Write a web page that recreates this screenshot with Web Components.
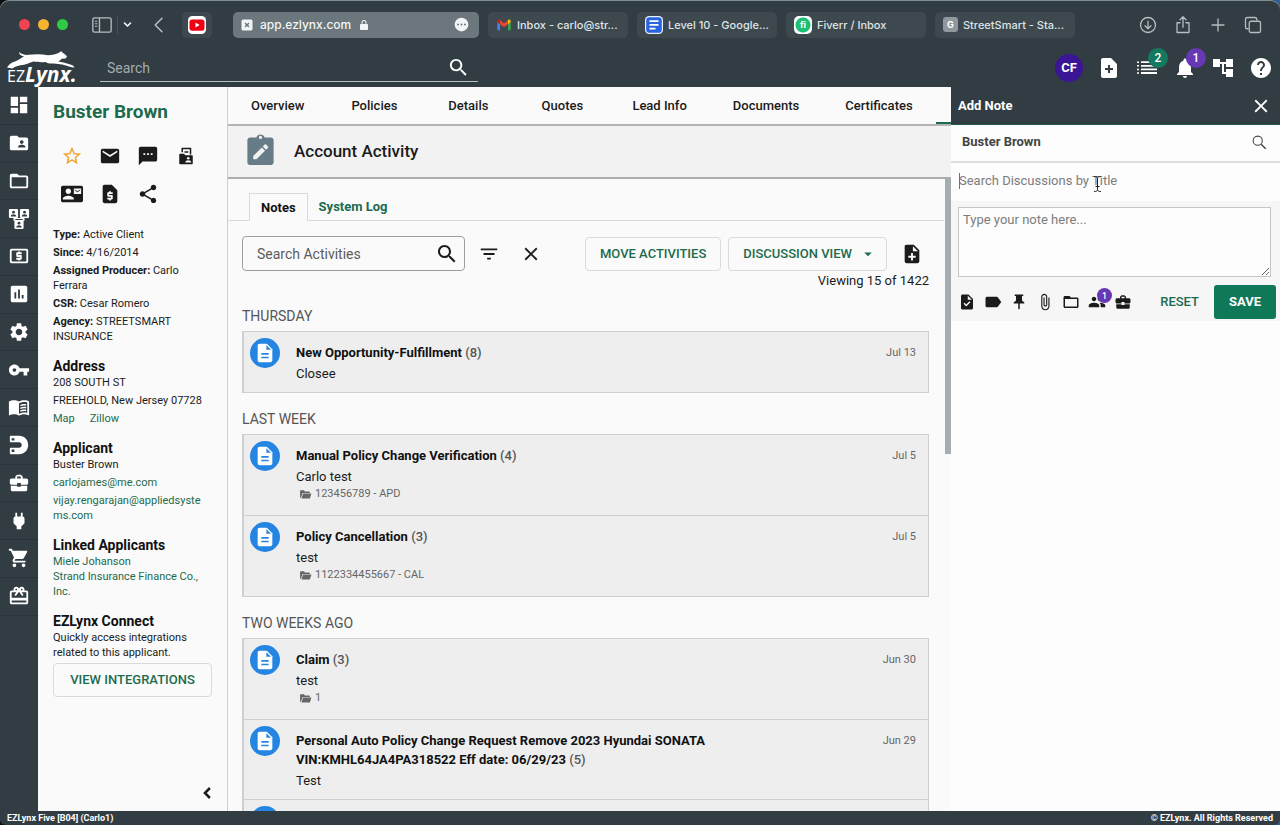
<!DOCTYPE html>
<html lang="en">
<head>
<meta charset="utf-8">
<title>EZLynx - Account Activity</title>
<style>
  html, body { margin: 0; height: 100%; }
  body {
    background: linear-gradient(90deg, #0b0f10 50%, #2e5f9a 50%);
    font-family: Roboto, "Liberation Sans", sans-serif;
    font-size: 14px;
    color: #1b1b1b;
  }
</style>
</head>
<body>
<ez-app></ez-app>

<script>
const BASE = `
  *, *::before, *::after { box-sizing: border-box; }
  button, input, textarea { font: inherit; color: inherit; margin: 0; }
  button { background: none; border: 0; padding: 0; cursor: pointer; }
  a { color: #1c6b4c; text-decoration: none; }
`;

function define(name, css, html, setup) {
  const tpl = document.createElement('template');
  tpl.innerHTML = `<style>${BASE}${css}</style>${html}`;
  customElements.define(name, class extends HTMLElement {
    constructor() {
      super();
      this.attachShadow({ mode: 'open' }).append(tpl.content.cloneNode(true));
    }
    connectedCallback() { if (setup) setup(this, this.shadowRoot); }
  });
}

const DOC = 'M14 2H6c-1.1 0-2 .9-2 2v16c0 1.1.9 2 2 2h12c1.1 0 2-.9 2-2V8l-6-6z';
const p = d => `<path fill-rule="evenodd" d="${d}"/>`;
const person = (x, y) => `<rect x="${x}" y="${y}" width="10" height="10" rx="1.2"/><circle cx="${x + 5}" cy="${y + 3.6}" r="1.5" fill="var(--hole)"/><path fill="var(--hole)" d="M${x + 2} ${y + 8.2}c0-3 6-3 6 0z"/>`;

const ICONS = {
  dashboard: p('M3 13h8V3H3v10zm0 8h8v-6H3v6zm10 0h8V11h-8v10zm0-18v6h8V3h-8z'),
  folderShared: p('M20 6h-8l-2-2H4c-1.1 0-2 .9-2 2v12c0 1.1.9 2 2 2h16c1.1 0 2-.9 2-2V8c0-1.1-.9-2-2-2zm-5 3c1.1 0 2 .9 2 2s-.9 2-2 2-2-.9-2-2 .9-2 2-2zm4 8h-8v-1c0-1.33 2.67-2 4-2s4 .67 4 2v1z'),
  folder: p('M20 6h-8l-2-2H4c-1.1 0-2 .9-2 2v12c0 1.1.9 2 2 2h16c1.1 0 2-.9 2-2V8c0-1.1-.9-2-2-2zm0 12H4V8h16v10z'),
  team: person(1, 1) + person(13, 1) + person(7, 13) + '<path d="M6 11v3h2v-2h8v2h2v-3z"/>',
  cash: p('M11 17h2v-1h1c.55 0 1-.45 1-1v-3c0-.55-.45-1-1-1h-3v-1h4V8h-2V7h-2v1h-1c-.55 0-1 .45-1 1v3c0 .55.45 1 1 1h3v1H9v2h2v1zm9-13H4c-1.11 0-2 .89-2 2v12c0 1.11.89 2 2 2h16c1.11 0 2-.89 2-2V6c0-1.11-.89-2-2-2zm0 14H4V6h16v12z'),
  report: p('M19 3H5c-1.1 0-2 .9-2 2v14c0 1.1.9 2 2 2h14c1.1 0 2-.9 2-2V5c0-1.1-.9-2-2-2zM9 17H7v-7h2v7zm4 0h-2V7h2v10zm4 0h-2v-4h2v4z'),
  settings: p('M19.14 12.94c.04-.3.06-.61.06-.94 0-.32-.02-.64-.07-.94l2.03-1.58c.18-.14.23-.41.12-.61l-1.92-3.32c-.12-.22-.37-.29-.59-.22l-2.39.96c-.5-.38-1.03-.7-1.62-.94l-.36-2.54c-.04-.24-.24-.41-.48-.41h-3.84c-.24 0-.43.17-.47.41l-.36 2.54c-.59.24-1.13.57-1.62.94l-2.39-.96c-.22-.08-.47 0-.59.22L2.74 8.87c-.12.21-.08.47.12.61l2.03 1.58c-.05.3-.09.63-.09.94s.02.64.07.94l-2.03 1.58c-.18.14-.23.41-.12.61l1.92 3.32c.12.22.37.29.59.22l2.39-.96c.5.38 1.03.7 1.62.94l.36 2.54c.05.24.24.41.48.41h3.84c.24 0 .44-.17.47-.41l.36-2.54c.59-.24 1.13-.56 1.62-.94l2.39.96c.22.08.47 0 .59-.22l1.92-3.32c.12-.22.07-.47-.12-.61l-2.01-1.58zM12 15.6c-1.98 0-3.6-1.62-3.6-3.6s1.62-3.6 3.6-3.6 3.6 1.62 3.6 3.6-1.62 3.6-3.6 3.6z'),
  key: p('M12.65 10C11.83 7.67 9.61 6 7 6c-3.31 0-6 2.69-6 6s2.69 6 6 6c2.61 0 4.83-1.67 5.65-4H17v4h4v-4h2v-4H12.65zM7 14c-1.1 0-2-.9-2-2s.9-2 2-2 2 .9 2 2-.9 2-2 2z'),
  book: p('M21 5c-1.11-.35-2.33-.5-3.5-.5-1.95 0-4.05.4-5.5 1.5-1.45-1.1-3.55-1.5-5.5-1.5S2.45 4.9 1 6v14.65c0 .25.25.5.5.5C3.1 20.45 5.05 20 6.5 20c1.95 0 4.05.4 5.5 1.5 1.35-.85 3.8-1.5 5.5-1.5 1.65 0 3.35.3 4.75 1.05.4.1.75-.1.75-.45V6c-.6-.45-1.25-.75-2-1zm0 13.5c-1.1-.35-2.3-.5-3.5-.5-1.7 0-4.15.65-5.5 1.5V8c1.35-.85 3.8-1.5 5.5-1.5 1.2 0 2.4.15 3.5.5v11.5z') + '<path d="M13.5 9.6c2-.9 4.2-1.1 6.300-.6v1.500c-2.100-.5-4.300-.3-6.300.6zM13.500 12.600c2-.9 4.200-1.100 6.300-.6v1.500c-2.100-.5-4.300-.3-6.300.6zM13.500 15.600c2-.9 4.200-1.100 6.300-.6v1.500c-2.100-.5-4.300-.3-6.300.6z"/>',
  magnet: '<path d="M3 2h9c6 0 10 4.400 10 10s-4 10-10 10H3c-.8 0-1-.4-1-1v-5c0-.6.300-1 1-1h9c1.800 0 3-1.300 3-3s-1.200-3-3-3H3c-.700 0-1-.4-1-1V3c0-.6.300-1 1-1z"/><path fill="var(--hole)" d="M4 4.500h3v2.500H4zM4 17h3v2.500H4z"/>',
  briefcase: p('M10 16v-1H3v4c0 1.110.89 2 2 2h14c1.110 0 2-.89 2-2v-4h-7v1h-4zm10-9h-4V5l-2-2h-4L8 5v2H4c-1.100 0-2 .9-2 2v3c0 1.110.89 2 2 2h6v-2h4v2h6c1.100 0 2-.9 2-2V9c0-1.100-.9-2-2-2zm-6 0h-4V5h4v2z'),
  plug: p('M16 7V3h-2v4h-4V3H8v4c-1 0-2 1-2 2v5.500L9.500 18v3h5v-3l3.500-3.500V9c0-1-1-2-2-2z'),
  cart: p('M7 18c-1.1 0-2 .9-2 2s.9 2 2 2 2-.9 2-2-.9-2-2-2zM1 2v2h2l3.600 7.590-1.350 2.450c-.16.28-.25.61-.25.96 0 1.100.9 2 2 2h12v-2H7.420c-.14 0-.25-.11-.25-.25l.03-.12.9-1.630h7.450c.75 0 1.410-.41 1.750-1.030l3.580-6.490c.08-.14.12-.31.12-.48 0-.55-.45-1-1-1H5.210l-.94-2H1zm16 16c-1.100 0-2 .9-2 2s.9 2 2 2 2-.9 2-2-.9-2-2-2z'),
  gift: p('M20 6h-2.18c.11-.31.18-.65.18-1 0-1.66-1.34-3-3-3-1.05 0-1.96.54-2.5 1.35l-.5.67-.5-.68C10.960 2.540 10.050 2 9 2 7.340 2 6 3.340 6 5c0 .35.07.69.18 1H4c-1.110 0-2 .89-2 2v11c0 1.110.89 2 2 2h16c1.110 0 2-.89 2-2V8c0-1.110-.89-2-2-2zm-5-2c.55 0 1 .45 1 1s-.45 1-1 1-1-.45-1-1 .45-1 1-1zM9 4c.55 0 1 .45 1 1s-.45 1-1 1-1-.45-1-1 .45-1 1-1zm11 15H4v-2h16v2zm0-5H4V8h5.080L7 10.830 8.620 12 11 8.760l1-1.360 1 1.360L15.380 12 17 10.830 14.920 8H20v6z'),
  search: p('M15.5 14h-.79l-.28-.27C15.410 12.590 16 11.110 16 9.500 16 5.910 13.090 3 9.500 3S3 5.910 3 9.500 5.910 16 9.500 16c1.610 0 3.090-.59 4.230-1.570l.27.28v.79l5 4.990L20.490 19l-4.990-5zm-6 0C7.010 14 5 11.990 5 9.500S7.010 5 9.500 5 14 7.010 14 9.500 11.990 14 9.500 14z'),
  searchThin: '<circle cx="9.500" cy="9.500" r="6.500" fill="none" stroke="currentColor" stroke-width="1.500"/><path d="M14.300 14.300l6.500 6.500" stroke="currentColor" stroke-width="2"/>',
  star: p('M22 9.240l-7.190-.62L12 2 9.190 8.630 2 9.240l5.460 4.730L5.820 21 12 17.270 18.180 21l-1.630-7.030L22 9.240zM12 15.400l-3.760 2.270 1-4.280-3.320-2.880 4.380-.38L12 6.100l1.710 4.040 4.380.38-3.320 2.880 1 4.280L12 15.400z'),
  mail: p('M20 4H4c-1.100 0-2 .9-2 2v12c0 1.100.9 2 2 2h16c1.100 0 2-.9 2-2V6c0-1.100-.9-2-2-2zm0 4l-8 5-8-5V6l8 5 8-5v2z'),
  sms: p('M20 2H4c-1.100 0-2 .9-2 2v18l4-4h14c1.100 0 2-.9 2-2V4c0-1.100-.9-2-2-2zM9 11H7V9h2v2zm4 0h-2V9h2v2zm4 0h-2V9h2v2z'),
  sharedDoc: '<path fill-rule="evenodd" d="M6 1h13v9h-2V3H8v4H6zM10 5.500h5v2h-5zM4 9h5.500l1.500 2H20c.6 0 1 .4 1 1v10c0 .6-.4 1-1 1H4c-.6 0-1-.4-1-1V10c0-.6.400-1 1-1z"/><circle cx="15" cy="15" r="1.700" fill="var(--hole)"/><path fill="var(--hole)" d="M11 20.500c0-4 8-4 8 0z"/>',
  contact: p('M21 8V7l-3 2-3-2v1l3 2 3-2zm1-5H2C.9 3 0 3.900 0 5v14c0 1.100.9 2 2 2h20c1.100 0 2-.9 2-2V5c0-1.100-.9-2-2-2zM8 6c1.660 0 3 1.340 3 3s-1.340 3-3 3-3-1.340-3-3 1.340-3 3-3zm6 12H2v-1c0-2 4-3.100 6-3.100s6 1.100 6 3.100v1zm8-6h-8V6h8v6z'),
  quote: p(DOC + 'm1 10h-4v1h3c.55 0 1 .45 1 1v3c0 .55-.45 1-1 1h-1v1h-2v-1H9v-2h4v-1h-3c-.55 0-1-.45-1-1v-3c0-.55.45-1 1-1h1V9h2v1h2v2z'),
  share: p('M18 16.080c-.76 0-1.440.3-1.960.77L8.910 12.700c.05-.23.09-.46.09-.7s-.04-.47-.09-.7l7.050-4.110c.54.5 1.250.81 2.040.81 1.660 0 3-1.340 3-3s-1.340-3-3-3-3 1.340-3 3c0 .24.04.47.09.7L8.040 9.810C7.500 9.310 6.790 9 6 9c-1.660 0-3 1.340-3 3s1.340 3 3 3c.79 0 1.500-.31 2.040-.81l7.120 4.160c-.05.21-.08.43-.08.65 0 1.610 1.310 2.920 2.920 2.920s2.920-1.310 2.920-2.920-1.310-2.920-2.920-2.920z'),
  noteAdd: p(DOC + 'm2 14h-3v3h-2v-3H8v-2h3v-3h2v3h3v2zm-3-7V3.500L18.500 9H13z'),
  noteAddSolid: p(DOC + 'm2 12h-3v3h-2v-3H8v-2h3V9h2v3h3v2z'),
  list: '<path d="M2 5.500h2V7H2zM2 9.100h2v1.500H2zM2 12.700h2v1.500H2zM2 16.300h2v1.500H2zM6 5.300h16v1.800H6zM6 8.900h16v1.800H6zM6 12.500h16v1.800H6zM6 16.100h16v1.800H6z"/>',
  bell: p('M12 22c1.100 0 2-.9 2-2h-4c0 1.100.89 2 2 2zm6-6v-5c0-3.070-1.640-5.640-4.500-6.320V4c0-.83-.67-1.500-1.500-1.500s-1.500.67-1.500 1.500v.68C7.630 5.360 6 7.920 6 11v5l-2 2v1h16v-1l-2-2z'),
  tree: p('M22 11V3h-7v3H9V3H2v8h7V8h2v10h4v3h7v-8h-7v3h-2V8h2v3z'),
  help: p('M12 2C6.480 2 2 6.480 2 12s4.480 10 10 10 10-4.480 10-10S17.520 2 12 2zm1 17h-2v-2h2v2zm2.070-7.750l-.9.92C13.450 12.900 13 13.500 13 15h-2v-.5c0-1.100.45-2.100 1.170-2.830l1.240-1.260c.37-.36.59-.86.59-1.410 0-1.100-.9-2-2-2s-2 .9-2 2H8c0-2.210 1.790-4 4-4s4 1.790 4 4c0 .88-.36 1.680-.93 2.250z'),
  close: p('M19 6.410L17.590 5 12 10.590 6.410 5 5 6.410 10.590 12 5 17.590 6.410 19 12 13.410 17.590 19 19 17.590 13.410 12z'),
  filter: p('M10 18h4v-2h-4v2zM3 6v2h18V6H3zm3 7h12v-2H6v2z'),
  dropdown: p('M7 10l5 5 5-5z'),
  task: p(DOC + 'm-3.060 16L7.400 14.460l1.410-1.410 2.120 2.120 4.240-4.240 1.410 1.410L10.940 18zM13 9V3.500L18.500 9H13z'),
  label: p('M18.630 5.840C18.270 5.330 17.670 5 17 5H4C2.900 5 2 5.900 2 7v10c0 1.100.9 2 2 2h13c.67 0 1.270-.33 1.630-.84L23 12l-4.370-6.160z'),
  pin: p('M16 9V4h1c.55 0 1-.45 1-1s-.45-1-1-1H7c-.55 0-1 .45-1 1s.45 1 1 1h1v5c0 1.660-1.340 3-3 3v2h5.970v7l1 1 1-1v-7H19v-2c-1.660 0-3-1.340-3-3z'),
  clip: p('M16.500 6v11.500c0 2.210-1.790 4-4 4s-4-1.790-4-4V5c0-1.380 1.120-2.500 2.500-2.500s2.500 1.120 2.500 2.500v10.500c0 .55-.45 1-1 1s-1-.45-1-1V6H10v9.500c0 1.380 1.120 2.500 2.500 2.500s2.500-1.120 2.500-2.500V5c0-2.210-1.790-4-4-4S7 2.790 7 5v12.500c0 3.040 2.460 5.500 5.500 5.500s5.500-2.460 5.500-5.500V6h-1.500z'),
  people: p('M16 11c1.660 0 3-1.340 3-3s-1.340-3-3-3-3 1.340-3 3 1.340 3 3 3zm-8 0c1.660 0 3-1.340 3-3S9.660 5 8 5 5 6.340 5 8s1.340 3 3 3zm0 2c-2.330 0-7 1.170-7 3.500V19h14v-2.500c0-2.330-4.670-3.500-7-3.500zm8 0c-.29 0-.62.02-.97.05 1.160.84 1.970 1.970 1.970 3.450V19h6v-2.500c0-2.330-4.670-3.500-7-3.500z'),
  doc: '<path d="' + DOC + '"/><path fill="var(--hole)" d="M13.500 3.500v5h5zM8 12h8v1.800H8zM8 16h8v1.800H8z"/>',
  folderOpen: '<path d="M2 18V5c0-.6.400-1 1-1h6l2 2.500h8c.6 0 1 .4 1 1V9H6.500L3.600 18zM4.500 19.500l3-9.300H23l-3 9.300z"/>',
  chevronLeft: '<path fill="none" stroke="currentColor" stroke-width="3" d="M15.500 6l-6 6 6 6"/>',
  clipboard: '<path fill-rule="evenodd" d="M19 3h-4.200a3 3 0 0 0-5.600 0H5c-1.100 0-2 .9-2 2v15c0 1.100.9 2 2 2h14c1.100 0 2-.9 2-2V5c0-1.100-.9-2-2-2zm-7-1.100a1.100 1.100 0 1 1 0 2.200 1.100 1.100 0 0 1 0-2.200z"/><path fill="var(--hole)" d="M7 15.800V18h2.200l5.900-5.900-2.200-2.200zM13.600 9.200l2.200 2.200 1.300-1.300c.3-.3.300-.6 0-.9l-1.300-1.300c-.3-.3-.6-.3-.9 0z"/>',
  sidebar: '<g fill="none" stroke="currentColor" stroke-width="1.600"><rect x="1" y="3.500" width="22" height="17" rx="2"/><path d="M9 3.500v17"/></g><path d="M3.500 7h3v1.200h-3zM3.500 10h3v1.200h-3zM3.500 13h3v1.200h-3z"/>',
  chevDown: '<path fill="none" stroke="currentColor" stroke-width="4" stroke-linecap="round" stroke-linejoin="round" d="M4 8l8 8 8-8"/>',
  back: '<path fill="none" stroke="currentColor" stroke-width="2" stroke-linecap="round" stroke-linejoin="round" d="M16 3L7 12l9 9"/>',
  lock: '<path fill-rule="evenodd" d="M7 10V7a5 5 0 0 1 10 0v3h1c1 0 2 .8 2 2v8c0 1.200-1 2-2 2H6c-1 0-2-.8-2-2v-8c0-1.200 1-2 2-2zm2 0h6V7a3 3 0 0 0-6 0z"/>',
  more: '<path fill-rule="evenodd" d="M12 1a11 11 0 1 0 0 22 11 11 0 0 0 0-22zM6.500 10.400a1.600 1.600 0 1 1 0 3.200 1.600 1.600 0 0 1 0-3.200zm5.500 0a1.600 1.600 0 1 1 0 3.200 1.600 1.600 0 0 1 0-3.200zm5.500 0a1.600 1.600 0 1 1 0 3.200 1.600 1.600 0 0 1 0-3.200z"/>',
  stop: '<path fill-rule="evenodd" d="M4 1h16a3 3 0 0 1 3 3v16a3 3 0 0 1-3 3H4a3 3 0 0 1-3-3V4a3 3 0 0 1 3-3zm3 8l3 3-3 3 2 2 3-3 3 3 2-2-3-3 3-3-2-2-3 3-3-3z"/>',
  download: '<g fill="none" stroke="currentColor" stroke-width="1.700" stroke-linecap="round" stroke-linejoin="round"><circle cx="12" cy="12" r="10"/><path d="M12 7v10M8 13l4 4 4-4"/></g>',
  upload: '<g fill="none" stroke="currentColor" stroke-width="1.700" stroke-linecap="round" stroke-linejoin="round"><path d="M8 9H4v13h16V9h-4M12 15V1M8 5l4-4 4 4"/></g>',
  plus: '<path fill="none" stroke="currentColor" stroke-width="1.700" stroke-linecap="round" d="M12 4v16M4 12h16"/>',
  tabs: '<g fill="none" stroke="currentColor" stroke-width="1.700"><rect x="7" y="7" width="15" height="15" rx="2.500"/><path d="M17 6V4.500A2.500 2.500 0 0 0 14.500 2h-10A2.500 2.500 0 0 0 2 4.500v10A2.500 2.500 0 0 0 4.500 17H6"/></g>',
  youtube: '<rect width="24" height="24" rx="6" fill="#fff"/><rect x="2" y="4.500" width="20" height="15" rx="3.500" fill="#f00014"/><path fill="#fff" d="M10 8.800l5.500 3.200-5.500 3.200z"/>',
  gmail: '<path fill="#4285f4" d="M2 20h4v-9L2 8z"/><path fill="#34a853" d="M18 20h4V8l-4 3z"/><path fill="#ea4335" d="M6 11V5l6 4.500L18 5v6l-6 4.500z"/><path fill="#c5221f" d="M2 8V6c0-2 2.400-3 4-1.500V11z"/><path fill="#fbbc04" d="M22 8V6c0-2-2.400-3-4-1.500V11z"/>',
  gdoc: '<rect width="24" height="24" rx="5.500" fill="#e6f0ff"/><rect x="1.600" y="1.600" width="20.800" height="20.800" rx="4.500" fill="#2a63e0"/><path fill="#fff" d="M6 5.500h12v2.600H6zM6 10.500h12v2.600H6zM6 15.500h8v2.600H6z"/>',
};

/* One glyph from the icon set; --size sets its box. */
define('ez-icon', `
  :host { display: inline-flex; flex: none; width: var(--size, 24px); height: var(--size, 24px); }
  svg { width: 100%; height: 100%; display: block; fill: currentColor; }
`, '<svg viewBox="0 0 24 24" aria-hidden="true"></svg>', (host, root) => {
  root.querySelector('svg').innerHTML = ICONS[host.getAttribute('name')] || '';
});

/* Browser tab */
define('browser-tab', `
  :host { display: flex; flex: 1 1 140px; min-width: 0; height: 26px; }
  a { display: flex; align-items: center; gap: 5px; width: 100%; padding: 0 8px; border-radius: 5px;
      background: #3e494f; color: #dfe4e6; font: 500 11px/16px Inter, sans-serif; white-space: nowrap; overflow: hidden; }
`, '<a href="#"><slot name="icon"></slot><span><slot></slot></span></a>');

define('browser-bar', `
  :host { display: flex; align-items: center; height: 49px; padding-right: 18px; color: #b5bec2; --size: 20px; }
  .lights { display: flex; gap: 8px; padding-left: 19px; width: 92px; }
  .lights i { width: 11px; height: 11px; border-radius: 50%; }
  button { display: flex; align-items: center; justify-content: center; }
  .sep { width: 1px; height: 18px; background: #46525a; margin: 0 5px; }
  .tiny { --size: 9px; color: #fff; margin-right: 18px; }
  .back { --size: 18px; margin-right: 14px; width: 18px; }
  .pinned { width: 30px; height: 26px; border-radius: 5px; background: #3e494f; --size: 18px; margin-right: 21px; }
  .tabs { display: flex; flex: 1; gap: 9px; min-width: 0; }
  .address { flex: 1 1 246px; height: 26px; display: flex; align-items: center; gap: 7px; padding: 0 10px 0 8px;
    border-radius: 5px; background: #6b777c; color: #f2f5f6; --size: 12px; font: 500 12px/16px Inter, sans-serif; }
  .address .end { margin-left: auto; --size: 15px; }
  .tools { display: flex; gap: 17px; margin-left: 64px; --size: 18px; }
  .fi, .g { display: flex; align-items: center; justify-content: center; flex: none; color: #fff; }
  .fi { width: 18px; height: 18px; border-radius: 5px; background: radial-gradient(circle, #1dbf73 7px, #fff 8px); font: 700 9px/16px Inter, sans-serif; }
  .g { width: 15px; height: 15px; border-radius: 3px; background: #8f989c; font: 700 9px/15px Inter, sans-serif; }
  .mail { --size: 16px; } .gd { --size: 18px; }
`, `
  <div class="lights"><i style="background:#ef4351"></i><i style="background:#f5b32f"></i><i style="background:#2fcb46"></i></div>
  <button aria-label="Sidebar"><ez-icon name="sidebar"></ez-icon></button>
  <span class="sep"></span>
  <button class="tiny" aria-label="Tab groups"><ez-icon name="chevDown"></ez-icon></button>
  <button class="back" aria-label="Back"><ez-icon name="back"></ez-icon></button>
  <button class="pinned" aria-label="YouTube"><ez-icon name="youtube"></ez-icon></button>
  <div class="tabs">
    <div class="address"><ez-icon name="stop"></ez-icon><span>app.ezlynx.com</span><ez-icon name="lock"></ez-icon><ez-icon class="end" name="more"></ez-icon></div>
    <browser-tab><ez-icon class="mail" slot="icon" name="gmail"></ez-icon>Inbox - carlo@str...</browser-tab>
    <browser-tab><ez-icon class="gd" slot="icon" name="gdoc"></ez-icon>Level 10 - Google...</browser-tab>
    <browser-tab><span class="fi" slot="icon">fi</span>Fiverr / Inbox</browser-tab>
    <browser-tab><span class="g" slot="icon">G</span>StreetSmart - Sta...</browser-tab>
  </div>
  <div class="tools">
    <button aria-label="Downloads"><ez-icon name="download"></ez-icon></button>
    <button aria-label="Share"><ez-icon name="upload"></ez-icon></button>
    <button aria-label="New tab"><ez-icon name="plus"></ez-icon></button>
    <button aria-label="Tab overview"><ez-icon name="tabs"></ez-icon></button>
  </div>
`);

define('ez-logo', `
  :host { display: block; position: relative; width: 74px; height: 36px; color: #fff; }
  svg { position: absolute; left: 0; top: 0; }
  .word { position: absolute; left: 0; bottom: 0; display: flex; align-items: baseline; line-height: 20px; }
  .ez { font: 400 16px/20px "Open Sans", sans-serif; }
  .lynx { font: italic 700 21px/20px "Open Sans", sans-serif; }
`, `
  <svg width="74" height="20" viewBox="0 0 74 20" aria-hidden="true"><path fill="#fff" d="M12 2c2 2 6 3.300 10 2.800 6-1 13-.800 19 .400 4-.2 8-1.200 11-2.500 1-1 2-1.500 3-1.200l.500 1.200c2 .8 3.500 2.200 4.500 4l-1.500 1.800-4 .3c-1 1.500-2 2.300-3.500 2.800 4 .6 9 1.800 13 3.200 2 .5 3 1.500 3.500 2.800l-3-.3c-5-2-11-3.500-18-3.800-4 .2-6-.4-8-1.500-5 .5-9-.2-12-.5-4 1.300-8 3.300-13 3.800-3 .5-6 1.500-8 3.200L0 17.500c2-3 5-5.500 8-6 3-1 6-3.500 9-5.300-3-.2-5-1.800-5-4.200z"/></svg>
  <div class="word"><span class="ez">EZ</span><span class="lynx">Lynx.</span></div>
`);

define('count-badge', `
  :host { position: absolute; display: flex; align-items: center; justify-content: center; border-radius: 50%;
    width: 20px; height: 20px; color: #fff; font-size: 12px; line-height: 16px; font-weight: 500; }
`, '<slot></slot>');

define('app-header', `
  :host { display: flex; align-items: center; height: 38px; padding: 0 7px; color: #fff; }
  .search { display: flex; align-items: center; width: 378px; height: 28px; margin: 0 auto 0 19px; padding: 0 8px 0 7px;
    border-bottom: 1px solid #b7bfc2; --size: 23px; }
  input { flex: 1; min-width: 0; border: 0; background: none; padding: 0; outline: 0; }
  input::placeholder { color: #a3acb0; opacity: 1; }
  nav { display: flex; align-items: center; gap: 14px; }
  nav button { position: relative; display: flex; }
  .avatar { width: 28px; height: 28px; border-radius: 50%; background: #3a1596; align-items: center; justify-content: center; font-size: 13px; font-weight: 700; line-height: 20px; }
  count-badge { top: -8px; left: 13px; }
  .b1 { background: #13795f; } .b2 { background: #6638b6; }
`, `
  <ez-logo></ez-logo>
  <label class="search"><input type="search" placeholder="Search" aria-label="Search"><ez-icon name="search"></ez-icon></label>
  <nav>
    <button class="avatar">CF</button>
    <button aria-label="Add"><ez-icon name="noteAddSolid"></ez-icon></button>
    <button aria-label="Tasks"><ez-icon name="list"></ez-icon><count-badge class="b1">2</count-badge></button>
    <button aria-label="Notifications"><ez-icon name="bell"></ez-icon><count-badge class="b2">1</count-badge></button>
    <button aria-label="Hierarchy"><ez-icon name="tree"></ez-icon></button>
    <button aria-label="Help"><ez-icon name="help"></ez-icon></button>
  </nav>
`);

define('nav-rail', `
  :host { display: block; width: 38px; background: #323d43; --hole: #323d43; --size: 22px; color: #fff; }
  nav { display: flex; flex-direction: column; height: 73%; }
  button { flex: 1; display: flex; align-items: center; justify-content: center; width: 100%; border-bottom: 1px solid #2a3439; }
`, '<nav></nav>', (host, root) => {
  const names = ['dashboard', 'folderShared', 'folder', 'team', 'cash', 'report', 'settings', 'key', 'book', 'magnet', 'briefcase', 'plug', 'cart', 'gift'];
  root.querySelector('nav').innerHTML = names.map(n => `<button aria-label="${n}"><ez-icon name="${n}"></ez-icon></button>`).join('');
});

define('profile-section', `
  :host { display: block; margin: 0 6px 13px 0; }
  h2 { margin: 0; font-size: 14px; line-height: 18px; font-weight: 700; color: #111; }
  .body { display: flex; flex-direction: column; gap: var(--row-gap, 3px); }
`, '<h2></h2><div class="body"><slot></slot></div>', (host, root) => {
  const t = host.getAttribute('heading'), h = root.querySelector('h2');
  if (t) h.textContent = t; else if (h) h.remove();
});

define('client-profile', `
  :host { display: flex; flex-direction: column; width: 190px; padding: 13px 15px 8px; background: #fafafa;
    border-right: 1px solid #d0d0d0; font-size: 11px; line-height: 15px; --hole: #fafafa; }
  h1 { margin: 0; font-size: 19px; line-height: 24px; font-weight: 700; color: #1c6b4c; }
  .actions { display: grid; grid-template-columns: repeat(4, 38px); grid-auto-rows: 38px; margin: 13px 0 14px; --size: 22px; }
  .actions button { display: flex; align-items: center; justify-content: center; }
  .actions .star { color: #f0a22e; }
  .actions .small { --size: 18px; }
  p { margin: 0; overflow-wrap: anywhere; }
  a { overflow-wrap: anywhere; }
  .links { display: flex; gap: 15px; }
  .view { width: 159px; height: 34px; margin-top: -10px; border: 1px solid #dadada; border-radius: 4px; color: #1c6b4c; font-size: 13px; line-height: 20px; font-weight: 500; background: #fbfbfb; }
  .collapse { margin: auto -5px 0 auto; display: flex; --size: 20px; }
`, `
  <h1>Buster Brown</h1>
  <div class="actions">
    <button class="star" aria-label="Favorite"><ez-icon name="star"></ez-icon></button>
    <button aria-label="Email"><ez-icon name="mail"></ez-icon></button>
    <button aria-label="Text"><ez-icon name="sms"></ez-icon></button>
    <button class="small" aria-label="Shared documents"><ez-icon name="sharedDoc"></ez-icon></button>
    <button aria-label="Contact"><ez-icon name="contact"></ez-icon></button>
    <button aria-label="Quote"><ez-icon name="quote"></ez-icon></button>
    <button aria-label="Share"><ez-icon name="share"></ez-icon></button>
  </div>
  <profile-section>
    <p><b>Type:</b> Active Client</p>
    <p><b>Since:</b> 4/16/2014</p>
    <p><b>Assigned Producer:</b> Carlo Ferrara</p>
    <p><b>CSR:</b> Cesar Romero</p>
    <p><b>Agency:</b> STREETSMART INSURANCE</p>
  </profile-section>
  <profile-section heading="Address">
    <p>208 SOUTH ST</p>
    <p>FREEHOLD, New Jersey 07728</p>
    <div class="links"><a href="#">Map</a><a href="#">Zillow</a></div>
  </profile-section>
  <profile-section heading="Applicant">
    <p>Buster Brown</p>
    <a href="#">carlojames@me.com</a>
    <a href="#">vijay.rengarajan@appliedsystems.com</a>
  </profile-section>
  <profile-section heading="Linked Applicants" style="--row-gap:0px">
    <a href="#">Miele Johanson</a>
    <a href="#">Strand Insurance Finance Co., Inc.</a>
  </profile-section>
  <profile-section heading="EZLynx Connect">
    <p>Quickly access integrations related to this applicant.</p>
  </profile-section>
  <button class="view">VIEW INTEGRATIONS</button>
  <button class="collapse" aria-label="Collapse"><ez-icon name="chevronLeft"></ez-icon></button>
`);

define('section-tabs', `
  :host { display: block; flex: none; overflow: hidden; height: 39px; background: #fafafa; border-bottom: 2px solid #b4b4b4; font-size: 13px; }
  nav { display: flex; }
  a { flex: none; min-width: 94px; padding: 0 23px; text-align: center; color: #1b1b1b; font-weight: 500; line-height: 38px; height: 37px; }
  .current { border-bottom: 2px solid #1c6b4c; }
`, `
  <nav><a href="#">Overview</a><a href="#">Policies</a><a href="#">Details</a><a href="#">Quotes</a><a href="#">Lead Info</a><a href="#">Documents</a><a href="#">Certificates</a><a href="#" class="current" aria-label="Account Activity"></a></nav>
`);

define('activity-item', `
  :host { display: flex; padding: 6px 12px 0 6px; min-height: 61px; border-bottom: 1px solid #cfcfcf; color: #1b1b1b; font-size: 13px; }
  .mark { flex: none; display: flex; align-items: center; justify-content: center; width: 30px; height: 30px; border-radius: 50%; background: #2485e2; color: #fff; --hole: #2485e2; --size: 22px; margin-right: 16px; }
  .text { flex: 1; min-width: 0; padding: 5px 0 8px; }
  h3 { margin: 0; max-width: 430px; font-size: 13px; line-height: 19px; font-weight: 700; color: #111; }
  h3 span { color: #555; font-weight: 500; }
  p { margin: 0; padding-top: 1px; line-height: 21px; }
  .file { display: flex; align-items: center; gap: 3px; height: 20px; padding: 0 0 6px 3px; color: #666; font-size: 11px; line-height: 14px; --size: 13px; }
  time { padding-top: 6px; color: #666; font-size: 11px; line-height: 18px; }
`, `
  <div class="mark"><ez-icon name="doc"></ez-icon></div>
  <div class="text"><h3><slot></slot> <span></span></h3><p></p></div><time></time>
`, (host, root) => {
  const attr = n => host.getAttribute(n) || '';
  root.querySelector('h3 span').textContent = attr('count') && `(${attr('count')})`;
  root.querySelector('p').textContent = attr('note');
  root.querySelector('time').textContent = attr('date');
  if (attr('file') && !root.querySelector('.file')) {
    const f = document.createElement('div');
    f.className = 'file';
    f.innerHTML = '<ez-icon name="folderOpen"></ez-icon><span></span>';
    f.lastChild.textContent = attr('file');
    root.querySelector('.text').append(f);
  }
});

define('activity-group', `
  :host { display: block; }
  h2 { margin: 0; padding: 16px 0 5px; font-size: 14px; line-height: 20px; font-weight: 400; color: #555; }
  .card { background: #eee; border: 1px solid #cfcfcf; border-width: 1px 1px 0 2px; }
`, '<h2></h2><div class="card"><slot></slot></div>', (host, root) => {
  root.querySelector('h2').textContent = host.getAttribute('heading');
});

define('account-activity', `
  :host { position: relative; display: flex; flex-direction: column; flex: 1; min-width: 0; overflow: hidden; background: #fafafa; }
  header { flex: none; display: flex; align-items: center; gap: 16px; height: 53px; padding: 0 15px 2px; background: #f2f2f2; border-bottom: 2px solid #adadad; --size: 35px; color: #667d88; --hole: #f2f2f2; }
  header h1 { margin: 0; font-size: 17px; line-height: 24px; font-weight: 500; color: #1b1b1b; }
  .scroll { flex: 1; min-height: 0; overflow: hidden; margin-right: 7px; }
  .views { display: flex; height: 42px; padding: 14px 0 0 21px; border-bottom: 1px solid #d8d8d8; font-size: 13px; }
  .views a { height: 28px; padding: 0 11px; line-height: 28px; font-weight: 700; }
  .views a.on { border: 1px solid #d8d8d8; border-bottom: 1px solid #fafafa; color: #111; background: #fafafa; }
  .tools { display: flex; align-items: center; padding: 15px 15px 0 14px; }
  .find { display: flex; align-items: center; width: 223px; height: 35px; padding: 0 5px 0 14px; border: 1px solid #9e9e9e; border-radius: 4px; color: #1b1b1b; }
  .find input { flex: 1; min-width: 0; border: 0; padding: 0; background: none; outline: 0; }
  .find input::placeholder { color: #5c5c5c; opacity: 1; }
  .ic { display: flex; flex: none; --size: 22px; }
  .filter { margin-left: 13px; }
  .clear { margin: 0 auto 0 20px; }
  .add { margin: 0 6px 0 14px; }
  .out { flex: none; display: flex; align-items: center; gap: 7px; height: 34px; margin-left: 7px; padding: 0 14px; border: 1px solid #dadada; border-radius: 4px; color: #1c6b4c; font-size: 13px; font-weight: 500; line-height: 20px; --size: 18px; }
  .menu { padding-right: 9px; }
  .total { margin: 0; padding: 0 15px; text-align: right; font-size: 13px; line-height: 19px; }
  .groups { padding: 0 15px 0 14px; }
  .thumb { position: absolute; right: 0; top: 92px; width: 6px; height: 275px; background: #a4adb1; }
`, `
  <section-tabs></section-tabs>
  <header><ez-icon name="clipboard"></ez-icon><h1>Account Activity</h1></header>
  <div class="scroll">
    <div class="views"><a href="#" class="on">Notes</a><a href="#">System Log</a></div>
    <div class="tools">
      <label class="find"><input placeholder="Search Activities" aria-label="Search Activities"><ez-icon name="search"></ez-icon></label>
      <button class="ic filter" aria-label="Filter"><ez-icon name="filter"></ez-icon></button>
      <button class="ic clear" aria-label="Clear"><ez-icon name="close"></ez-icon></button>
      <button class="out">MOVE ACTIVITIES</button>
      <button class="out menu">DISCUSSION VIEW<ez-icon name="dropdown"></ez-icon></button>
      <button class="ic add" aria-label="Add note"><ez-icon name="noteAdd"></ez-icon></button>
    </div>
    <p class="total">Viewing 15 of 1422</p>
    <div class="groups">
      <activity-group heading="THURSDAY">
        <activity-item count="8" note="Closee" date="Jul 13">New Opportunity-Fulfillment</activity-item>
      </activity-group>
      <activity-group heading="LAST WEEK">
        <activity-item count="4" note="Carlo test" date="Jul 5" file="123456789 - APD">Manual Policy Change Verification</activity-item>
        <activity-item count="3" note="test" date="Jul 5" file="1122334455667 - CAL">Policy Cancellation</activity-item>
      </activity-group>
      <activity-group heading="TWO WEEKS AGO">
        <activity-item count="3" note="test" date="Jun 30" file="1">Claim</activity-item>
        <activity-item count="5" note="Test" date="Jun 29">Personal Auto Policy Change Request Remove 2023 Hyundai SONATA VIN:KMHL64JA4PA318522 Eff date: 06/29/23</activity-item>
        <activity-item></activity-item>
      </activity-group>
    </div>
  </div>
  <div class="thumb"></div>
`);

define('add-note', `
  :host { display: flex; flex-direction: column; width: 329px; background: #fdfdfd; font-size: 13px; line-height: 18px; }
  header { flex: none; display: flex; align-items: center; justify-content: space-between; height: 38px; padding: 0 8px 0 7px; background: #323d43; color: #fff; --size: 22px; border-bottom: 1px solid #1d5a4a; }
  h2 { margin: 0; font-size: 13px; line-height: 20px; font-weight: 700; }
  header button, .bar button { display: flex; }
  input, textarea { display: block; min-width: 0; border: 0; outline: 0; background: none; padding: 0; }
  input::placeholder, textarea::placeholder { color: #7c7c7c; opacity: 1; }
  .who { display: flex; align-items: center; height: 38px; padding: 0 12px 2px 11px; border-bottom: 2px solid #dedede; color: #444; --size: 17px; }
  .who input { flex: 1; font-weight: 700; }
  .title { position: relative; display: flex; align-items: center; height: 38px; padding: 0 8px 2px; caret-color: #1c6b4c; }
  .title input { width: 100%; }
  .caret { position: absolute; left: 8px; top: 10px; width: 1px; height: 16px; background: #3d8a6e; }
  .pointer { position: absolute; left: 141px; top: 13px; width: 11px; height: 16px; }
  .compose { padding: 6px 9px 2px 7px; background: #f6f6f6; }
  textarea { width: 100%; height: 70px; padding: 3px 4px; border: 1px solid #c6c6c6; background: #fdfdfd; resize: both; }
  .bar { display: flex; align-items: center; height: 34px; margin: 8px -5px 0 0; --size: 18px; }
  .bar .ic { position: relative; margin-right: 8px; }
  .bar .reset { margin: 0 15px 0 auto; color: #1c6b4c; line-height: 20px; font-weight: 500; }
  .bar .save { align-items: center; justify-content: center; width: 62px; height: 34px; border-radius: 3px; background: #0e7859; color: #fff; line-height: 20px; font-weight: 700; }
  count-badge { width: 15px; height: 15px; top: -5px; left: 9px; background: #6638b6; font-size: 9px; line-height: 12px; }
`, `
  <header><h2>Add Note</h2><button aria-label="Close"><ez-icon name="close"></ez-icon></button></header>
  <label class="who"><input value="Buster Brown" aria-label="Applicant"><ez-icon name="searchThin"></ez-icon></label>
  <div class="title">
    <input placeholder="Search Discussions by Title" aria-label="Search Discussions by Title">
    <span class="caret"></span>
    <svg class="pointer" viewBox="0 0 11 16" fill="none" stroke="#222" aria-hidden="true"><path d="M2 .500c2 0 3.500.500 3.500 2v11c0 1.500-1.500 2-3.500 2M9 .500c-2 0-3.500.500-3.500 2M9 15.500c-2 0-3.500-.500-3.500-2M3.500 10.500h4"/></svg>
  </div>
  <div class="compose">
    <textarea placeholder="Type your note here..." aria-label="Note"></textarea>
    <div class="bar">
      <button class="ic" aria-label="Task"><ez-icon name="task"></ez-icon></button>
      <button class="ic" aria-label="Label"><ez-icon name="label"></ez-icon></button>
      <button class="ic" aria-label="Pin"><ez-icon name="pin"></ez-icon></button>
      <button class="ic" aria-label="Attach"><ez-icon name="clip"></ez-icon></button>
      <button class="ic" aria-label="Folder"><ez-icon name="folder"></ez-icon></button>
      <button class="ic" aria-label="People"><ez-icon name="people"></ez-icon><count-badge>1</count-badge></button>
      <button class="ic" aria-label="Business"><ez-icon name="briefcase"></ez-icon></button>
      <button class="reset">RESET</button>
      <button class="save">SAVE</button>
    </div>
  </div>
`);

define('ez-app', `
  :host { display: flex; flex-direction: column; height: 100vh; overflow: hidden; background: #323d43; box-shadow: inset 0 1px #7e8e92; border-radius: 9px 9px 6px 6px; }
  browser-bar, app-header { flex: none; }
  main { display: flex; flex: 1; min-height: 0; }
  nav-rail, client-profile, add-note { flex: none; }
  footer { flex: none; display: flex; justify-content: space-between; height: 14px; padding: 0 7px; color: #fff; font-size: 9px; line-height: 14px; font-weight: 700; }
`, `
  <browser-bar></browser-bar>
  <app-header></app-header>
  <main>
    <nav-rail></nav-rail>
    <client-profile></client-profile>
    <account-activity></account-activity>
    <add-note></add-note>
  </main>
  <footer><span>EZLynx Five [B04] (Carlo1)</span><span>© EZLynx. All Rights Reserved</span></footer>
`);
</script>
</body>
</html>
